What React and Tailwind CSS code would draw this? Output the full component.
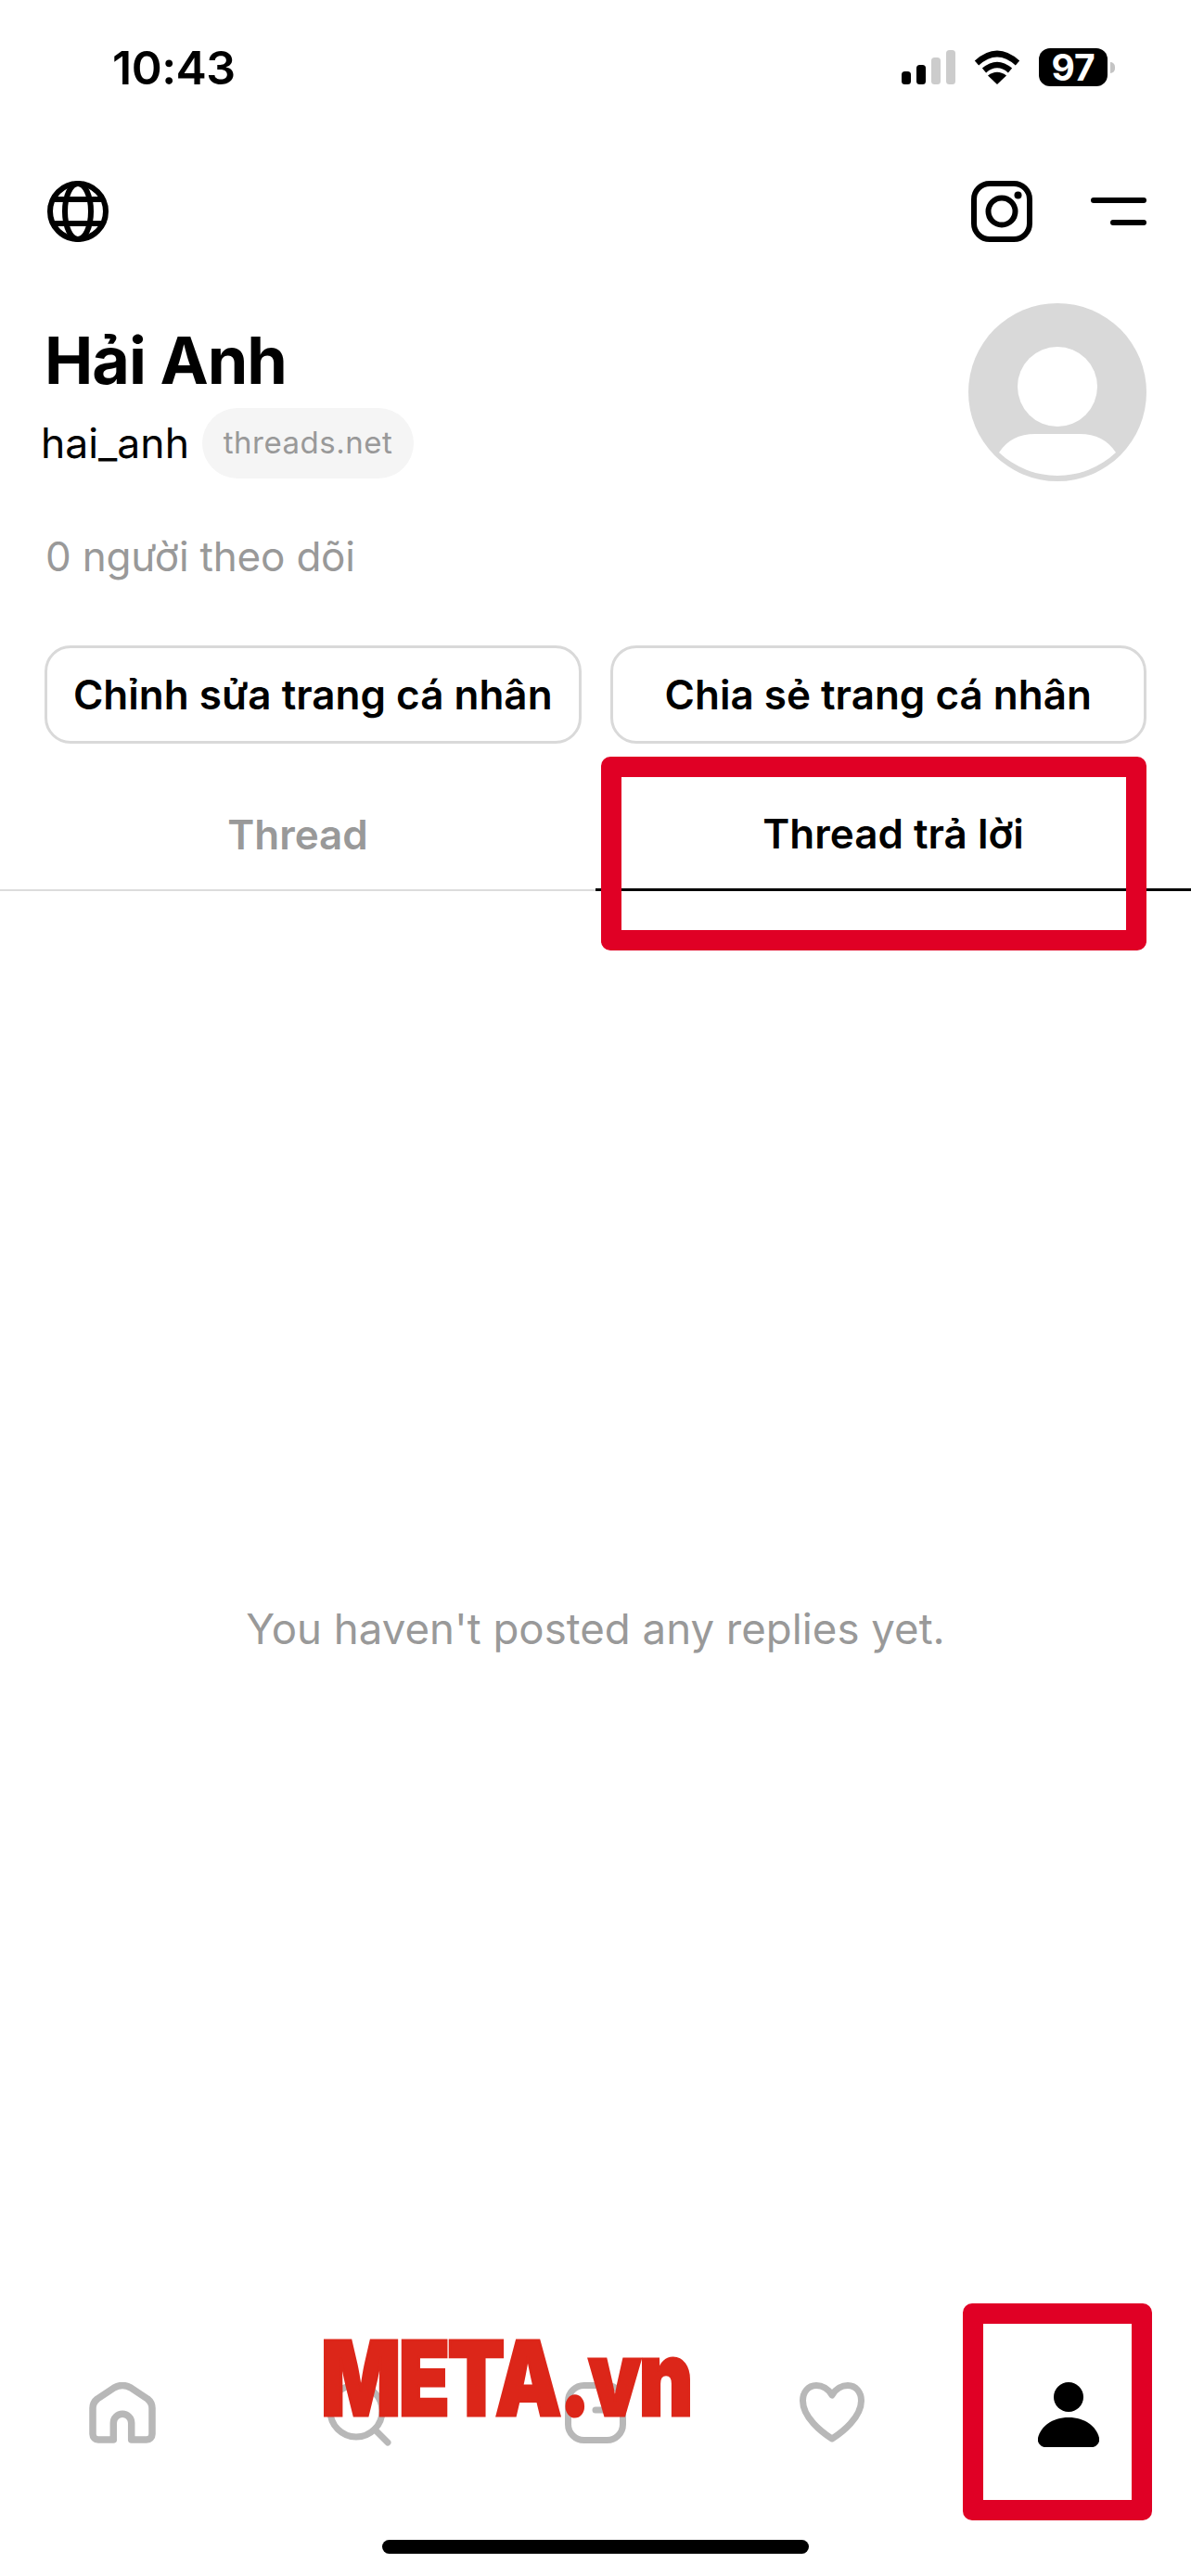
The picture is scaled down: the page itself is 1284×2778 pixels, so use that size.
import React from 'react';

const RED_BOX = 'absolute border-[22px] border-[#e00025] rounded-[10px] pointer-events-none';

const SignalIcon = () => (
    <svg width="58" height="37" viewBox="0 0 58 37">
        <rect x="0" y="23" width="10" height="14" rx="3.5" fill="#000" />
        <rect x="16" y="16" width="10" height="21" rx="3.5" fill="#000" />
        <rect x="32" y="8" width="10" height="29" rx="3.5" fill="#ccc" />
        <rect x="48" y="0" width="10" height="37" rx="3.5" fill="#ccc" />
    </svg>
);

const WifiIcon = () => (
    <svg width="50" height="37" viewBox="0 0 50 37" fill="none" stroke="#000" strokeWidth="6.5">
        <path d="M3 14 Q25 -6 47 14" />
        <path d="M11 22 Q25 10 39 22" />
        <path d="M25 37 L15 27.5 Q25 20 35 27.5 Z" fill="#000" stroke="none" />
    </svg>
);

const GlobeIcon = () => (
    <svg width="66" height="66" viewBox="0 0 66 66" fill="none" stroke="#000" strokeWidth="6">
        <circle cx="33" cy="33" r="30" />
        <ellipse cx="33" cy="33" rx="14" ry="30" />
        <path d="M6 20 H60 M6 46 H60" />
    </svg>
);

const InstagramIcon = () => (
    <svg width="66" height="66" viewBox="0 0 66 66" fill="none" stroke="#000" strokeWidth="6">
        <rect x="3" y="3" width="60" height="60" rx="17" />
        <circle cx="33" cy="33" r="14.5" />
        <circle cx="50.5" cy="15.5" r="4" fill="#000" stroke="none" />
    </svg>
);

const AvatarIcon = () => (
    <svg width="192" height="192" viewBox="0 0 192 192">
        <circle cx="96" cy="96" r="96" fill="#d9d9d9" />
        <circle cx="96" cy="90" r="43" fill="#fff" />
        <path d="M33 161 Q46 141 72 141 H120 Q146 141 159 161 A92 92 0 0 1 33 161 Z" fill="#fff" />
    </svg>
);

const HomeIcon = () => (
    <svg width="72" height="66" viewBox="0 0 72 66" fill="none" stroke="#b8b8b8" strokeWidth="7.5" strokeLinecap="round" strokeLinejoin="round">
        <path d="M26.3 62 H10 a6 6 0 0 1 -6 -6 V28 q0 -6 5 -10 L27 6 q9 -5 18 0 L63 18 q5 4 5 10 V56 a6 6 0 0 1 -6 6 H45.7 V44 a9.7 9.7 0 0 0 -19.4 0 Z" />
    </svg>
);

const SearchIcon = () => (
    <svg width="70" height="70" viewBox="0 0 70 70" fill="none" stroke="#b8b8b8" strokeWidth="7" strokeLinecap="round">
        <circle cx="32" cy="31" r="28" />
        <path d="M52 51 L66 65" />
    </svg>
);

const ComposeIcon = () => (
    <svg width="66" height="66" viewBox="0 0 66 66" fill="none" stroke="#b8b8b8" strokeWidth="7" strokeLinecap="round">
        <rect x="3.5" y="3.5" width="59" height="59" rx="17" />
        <path d="M33 30 H46" />
    </svg>
);

const HeartIcon = () => (
    <svg width="70" height="65" viewBox="0 0 70 65" fill="none" stroke="#b8b8b8" strokeWidth="7" strokeLinejoin="round">
        <path d="M35 14 C31 7 24 3.5 18 3.5 C9 3.5 3.5 11 3.5 20 C3.5 38 24 54 35 61 C46 54 66.5 38 66.5 20 C66.5 11 61 3.5 52 3.5 C46 3.5 39 7 35 14 Z" />
    </svg>
);

const PersonIcon = () => (
    <svg width="66" height="70" viewBox="0 0 66 70">
        <circle cx="33" cy="16" r="16" fill="#000" />
        <path d="M33 38 C15 38 3 48 0 60 C-1 65 3 70 8 70 H58 C63 70 67 65 66 60 C63 48 51 38 33 38 Z" fill="#000" />
    </svg>
);

const App = () => {
    return (
        <div className="relative w-[1284px] h-[2778px] bg-white flex flex-col font-['Inter',sans-serif] text-black overflow-hidden">
            {/* status bar */}
            <div className="flex items-center justify-between pl-[121px] pr-[82px] pt-[52px] h-[93px]">
                <span className="text-[50px] leading-none font-semibold tracking-[-0.5px]">10:43</span>
                <div className="flex items-center">
                    <SignalIcon />
                    <div className="ml-[20px]"><WifiIcon /></div>
                    <div className="ml-[20px] w-[74px] h-[41px] bg-black rounded-[12px] flex items-center justify-center text-white text-[39px] font-bold leading-none">97</div>
                    <div className="ml-[3px] w-[5px] h-[12px] bg-[#c4c4c4] rounded-r-full"></div>
                </div>
            </div>

            {/* top icons */}
            <div className="flex items-center justify-between pl-[51px] pr-[48px] mt-[102px]">
                <GlobeIcon />
                <div className="flex items-center gap-[63px]">
                    <InstagramIcon />
                    <div className="flex flex-col items-end gap-[18px]">
                        <div className="w-[60px] h-[6px] bg-black rounded-full"></div>
                        <div className="w-[39px] h-[6px] bg-black rounded-full"></div>
                    </div>
                </div>
            </div>

            {/* profile */}
            <div className="flex justify-between pl-[48px] pr-[48px] mt-[66px]">
                <div>
                    <h1 className="text-[70px] leading-[85px] font-bold tracking-[-1px] mt-[19px]">Hải Anh</h1>
                    <div className="flex items-center mt-[9px]">
                        <span className="text-[44.5px] leading-none -ml-[4px]">hai_anh</span>
                        <span className="ml-[14px] h-[76px] w-[228px] bg-[#f5f5f5] rounded-full flex items-center justify-center text-[33px] text-[#999] tracking-[0.5px]">threads.net</span>
                    </div>
                </div>
                <AvatarIcon />
            </div>

            <p className="pl-[49px] mt-[55px] text-[44px] leading-[53px] tracking-[-0.2px] text-[#999]">0 người theo dõi</p>

            {/* buttons */}
            <div className="grid grid-cols-2 gap-[31px] pl-[48px] pr-[48px] mt-[69px]">
                <button className="h-[106px] border-[3px] border-[#d9d9d9] rounded-[28px] text-[44px] font-semibold">Chỉnh sửa trang cá nhân</button>
                <button className="h-[106px] border-[3px] border-[#d9d9d9] rounded-[28px] text-[44px] font-semibold">Chia sẻ trang cá nhân</button>
            </div>

            {/* tabs */}
            <div className="grid grid-cols-2 h-[159px] text-[44px] font-semibold">
                <div className="flex items-center justify-center border-b-2 border-[#dcdcdc] text-[#999] pt-[38px]">Thread</div>
                <div className="flex items-center justify-center border-b-[3px] border-black pt-[38px]">Thread trả lời</div>
            </div>

            <main className="flex-1 flex items-center justify-center">
                <p className="text-[45.6px] text-[#999]">You haven't posted any replies yet.</p>
            </main>

            {/* bottom nav */}
            <nav className="h-[225px] flex flex-col">
                <div className="grid grid-cols-5 items-start px-[4px] pt-[16px] h-[186px]">
                    <div className="flex justify-center"><HomeIcon /></div>
                    <div className="flex justify-center"><SearchIcon /></div>
                    <div className="flex justify-center"><ComposeIcon /></div>
                    <div className="flex justify-center"><HeartIcon /></div>
                    <div className="flex justify-center"><PersonIcon /></div>
                </div>
                <div className="w-[460px] h-[15px] bg-black rounded-full mx-auto"></div>
            </nav>

            {/* annotations over the screenshot */}
            <div className={`${RED_BOX} left-[648px] top-[816px] w-[588px] h-[209px]`}></div>
            <div className={`${RED_BOX} left-[1038px] top-[2484px] w-[204px] h-[234px]`}></div>
            <div className="absolute left-[346px] top-[2523px] h-[82px] flex items-center text-[112px] leading-none font-black text-[#dc2619] [-webkit-text-stroke:3px_#dc2619] tracking-[-3px] origin-left scale-x-[0.805] whitespace-nowrap">META.vn</div>
        </div>
    );
};

export default App;
